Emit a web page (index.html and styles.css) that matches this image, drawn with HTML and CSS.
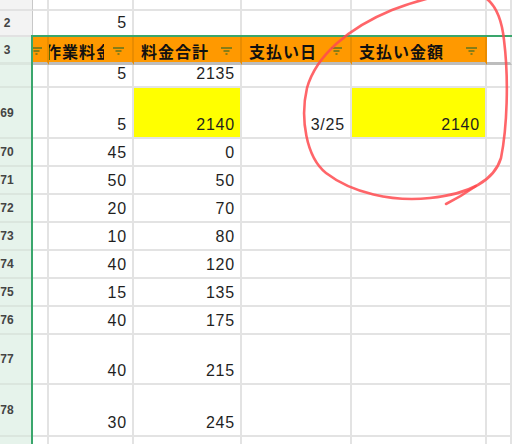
FILE: index.html
```html
<!DOCTYPE html>
<html lang="ja">
<head>
<meta charset="utf-8">
<title>Sheet</title>
<link rel="stylesheet" href="styles.css">
</head>
<body>
<div class="sheet">
  <div class="row r1">
    <div class="rh"></div><div class="c"></div><div class="c"></div><div class="c"></div><div class="c"></div><div class="c"></div><div class="c"></div>
  </div>
  <div class="row r2">
    <div class="rh"><span class="lbl">2</span></div><div class="c"></div><div class="c">5</div><div class="c"></div><div class="c"></div><div class="c"></div><div class="c"></div>
  </div>
  <div class="row hdr">
    <div class="rh sel hb"><span class="lbl">3</span></div>
    <div class="h ha"><span class="fb fa"><svg class="ficon" viewBox="0 0 11 8"><path d="M0 1H11M2.5 4H8.5M4.5 7H6.5"/></svg></span></div>
    <div class="h"><span class="hl clip"><span class="shift">作業料金</span></span><span class="fb"><svg class="ficon" viewBox="0 0 11 8"><path d="M0 1H11M2.5 4H8.5M4.5 7H6.5"/></svg></span></div>
    <div class="h"><span class="hl">料金合計</span><span class="fb"><svg class="ficon" viewBox="0 0 11 8"><path d="M0 1H11M2.5 4H8.5M4.5 7H6.5"/></svg></span></div>
    <div class="h"><span class="hl">支払い日</span><span class="fb"><svg class="ficon" viewBox="0 0 11 8"><path d="M0 1H11M2.5 4H8.5M4.5 7H6.5"/></svg></span></div>
    <div class="h"><span class="hl">支払い金額</span><span class="fb"><svg class="ficon" viewBox="0 0 11 8"><path d="M0 1H11M2.5 4H8.5M4.5 7H6.5"/></svg></span></div>
    <div class="c hb"></div>
  </div>
  <div class="row r68">
    <div class="rh sel"></div><div class="c"></div><div class="c">5</div><div class="c">2135</div><div class="c"></div><div class="c"></div><div class="c"></div>
  </div>
  <div class="row r69">
    <div class="rh sel"><span class="lbl">69</span></div><div class="c"></div><div class="c">5</div><div class="c y">2140</div><div class="c">3/25</div><div class="c y">2140</div><div class="c"></div>
  </div>
  <div class="row">
    <div class="rh sel"><span class="lbl">70</span></div><div class="c"></div><div class="c">45</div><div class="c">0</div><div class="c"></div><div class="c"></div><div class="c"></div>
  </div>
  <div class="row">
    <div class="rh sel"><span class="lbl">71</span></div><div class="c"></div><div class="c">50</div><div class="c">50</div><div class="c"></div><div class="c"></div><div class="c"></div>
  </div>
  <div class="row">
    <div class="rh sel"><span class="lbl">72</span></div><div class="c"></div><div class="c">20</div><div class="c">70</div><div class="c"></div><div class="c"></div><div class="c"></div>
  </div>
  <div class="row">
    <div class="rh sel"><span class="lbl">73</span></div><div class="c"></div><div class="c">10</div><div class="c">80</div><div class="c"></div><div class="c"></div><div class="c"></div>
  </div>
  <div class="row">
    <div class="rh sel"><span class="lbl">74</span></div><div class="c"></div><div class="c">40</div><div class="c">120</div><div class="c"></div><div class="c"></div><div class="c"></div>
  </div>
  <div class="row">
    <div class="rh sel"><span class="lbl">75</span></div><div class="c"></div><div class="c">15</div><div class="c">135</div><div class="c"></div><div class="c"></div><div class="c"></div>
  </div>
  <div class="row">
    <div class="rh sel"><span class="lbl">76</span></div><div class="c"></div><div class="c">40</div><div class="c">175</div><div class="c"></div><div class="c"></div><div class="c"></div>
  </div>
  <div class="row r77">
    <div class="rh sel"><span class="lbl">77</span></div><div class="c"></div><div class="c">40</div><div class="c">215</div><div class="c"></div><div class="c"></div><div class="c"></div>
  </div>
  <div class="row r78">
    <div class="rh sel"><span class="lbl">78</span></div><div class="c"></div><div class="c">30</div><div class="c">245</div><div class="c"></div><div class="c"></div><div class="c"></div>
  </div>
  <div class="row">
    <div class="rh sel"></div><div class="c"></div><div class="c"></div><div class="c"></div><div class="c"></div><div class="c"></div><div class="c"></div>
  </div>
</div>
<div class="selection"></div>
<svg class="scribble" viewBox="0 0 512 444" width="512" height="444">
  <path d="M501 158C494 181 468 194 430 198C392 202 352 193 326 173C306 157 300 118 307 88C316 56 348 28 392 10C418 0 442 -6 466 -8C490 -8 501 12 504 40C509 80 507 128 501 158"/>
  <path d="M446 204C456 199 466 193 476 186"/>
</svg>
</body>
</html>
```
FILE: styles.css
```css
* {
  box-sizing: border-box;
  margin: 0;
  padding: 0;
}

html,
body {
  width: 512px;
  height: 444px;
  overflow: hidden;
  background: #fff;
}

body {
  position: relative;
  font-family: "Liberation Sans", "Noto Sans CJK JP", sans-serif;
  color: #1f1f1f;
}

.sheet {
  display: flex;
  flex-direction: column;
}

.row {
  display: grid;
  grid-template-columns: 33px 16px 85px 108px 110px 135px 25px;
  height: 28px;
  flex-shrink: 0;
}

.r1 { height: 11px; }
.r2 { height: 26px; }
.hdr { height: 28px; }
.r68 { height: 23px; }
.r69 { height: 51px; }
.r77 { height: 50px; }
.r78 { height: 52px; }

.rh {
  display: flex;
  align-items: center;
  background: #f3f3f3;
  border-right: 1px solid #c8c8c8;
  border-bottom: 2px solid #e2e2e2;
  overflow: hidden;
}

.rh.sel {
  background: #e6f3eb;
  border-bottom-color: #dbe6de;
}

.lbl {
  width: 14px;
  text-align: center;
  font-size: 12px;
  font-weight: 700;
  color: #444;
  white-space: nowrap;
}

.c {
  display: flex;
  align-items: flex-end;
  justify-content: flex-end;
  padding: 0 5px 4px 0;
  border-right: 2px solid #e3e3e3;
  border-bottom: 2px solid #e3e3e3;
  font-size: 16px;
  line-height: 16px;
  letter-spacing: 0.8px;
  white-space: nowrap;
  overflow: hidden;
}

.y {
  background: #ffff00;
}

.hb {
  border-bottom: 3px solid #bdbdbd;
}

.h {
  display: flex;
  align-items: center;
  padding-top: 3px;
  background: #ff9900;
  border-right: 2px solid #e98c00;
  border-bottom: 3px solid #bdbdbd;
}

.ha {
  justify-content: flex-end;
  padding-right: 2px;
  overflow: hidden;
}

.hl {
  flex: 1;
  min-width: 0;
  padding-left: 7px;
  white-space: nowrap;
  font-family: "Noto Sans CJK JP", sans-serif;
  font-size: 16px;
  line-height: 22px;
  font-weight: 700;
  letter-spacing: 1px;
  color: #111;
}

.clip {
  overflow: hidden;
}

.shift {
  display: inline-block;
  margin-left: -11px;
}

.fb {
  flex-shrink: 0;
  width: 28px;
  height: 20px;
  display: flex;
  align-items: center;
  justify-content: center;
  background: #ff9900;
}

.fa {
  width: 14px;
  justify-content: flex-start;
  margin-left: -1px;
}

.ficon {
  width: 11px;
  height: 8px;
  fill: none;
  stroke: #5f7420;
  stroke-width: 1.5;
}

.selection {
  position: absolute;
  top: 35px;
  left: 31px;
  right: -4px;
  bottom: -4px;
  border-top: 2px solid #3aa66c;
  border-left: 2px solid #3aa66c;
  pointer-events: none;
}

.scribble {
  position: absolute;
  top: 0;
  left: 0;
  pointer-events: none;
  fill: none;
  stroke: #ff4a4f;
  stroke-opacity: 0.85;
  stroke-width: 2.6;
  stroke-linecap: round;
  stroke-linejoin: round;
}
```
